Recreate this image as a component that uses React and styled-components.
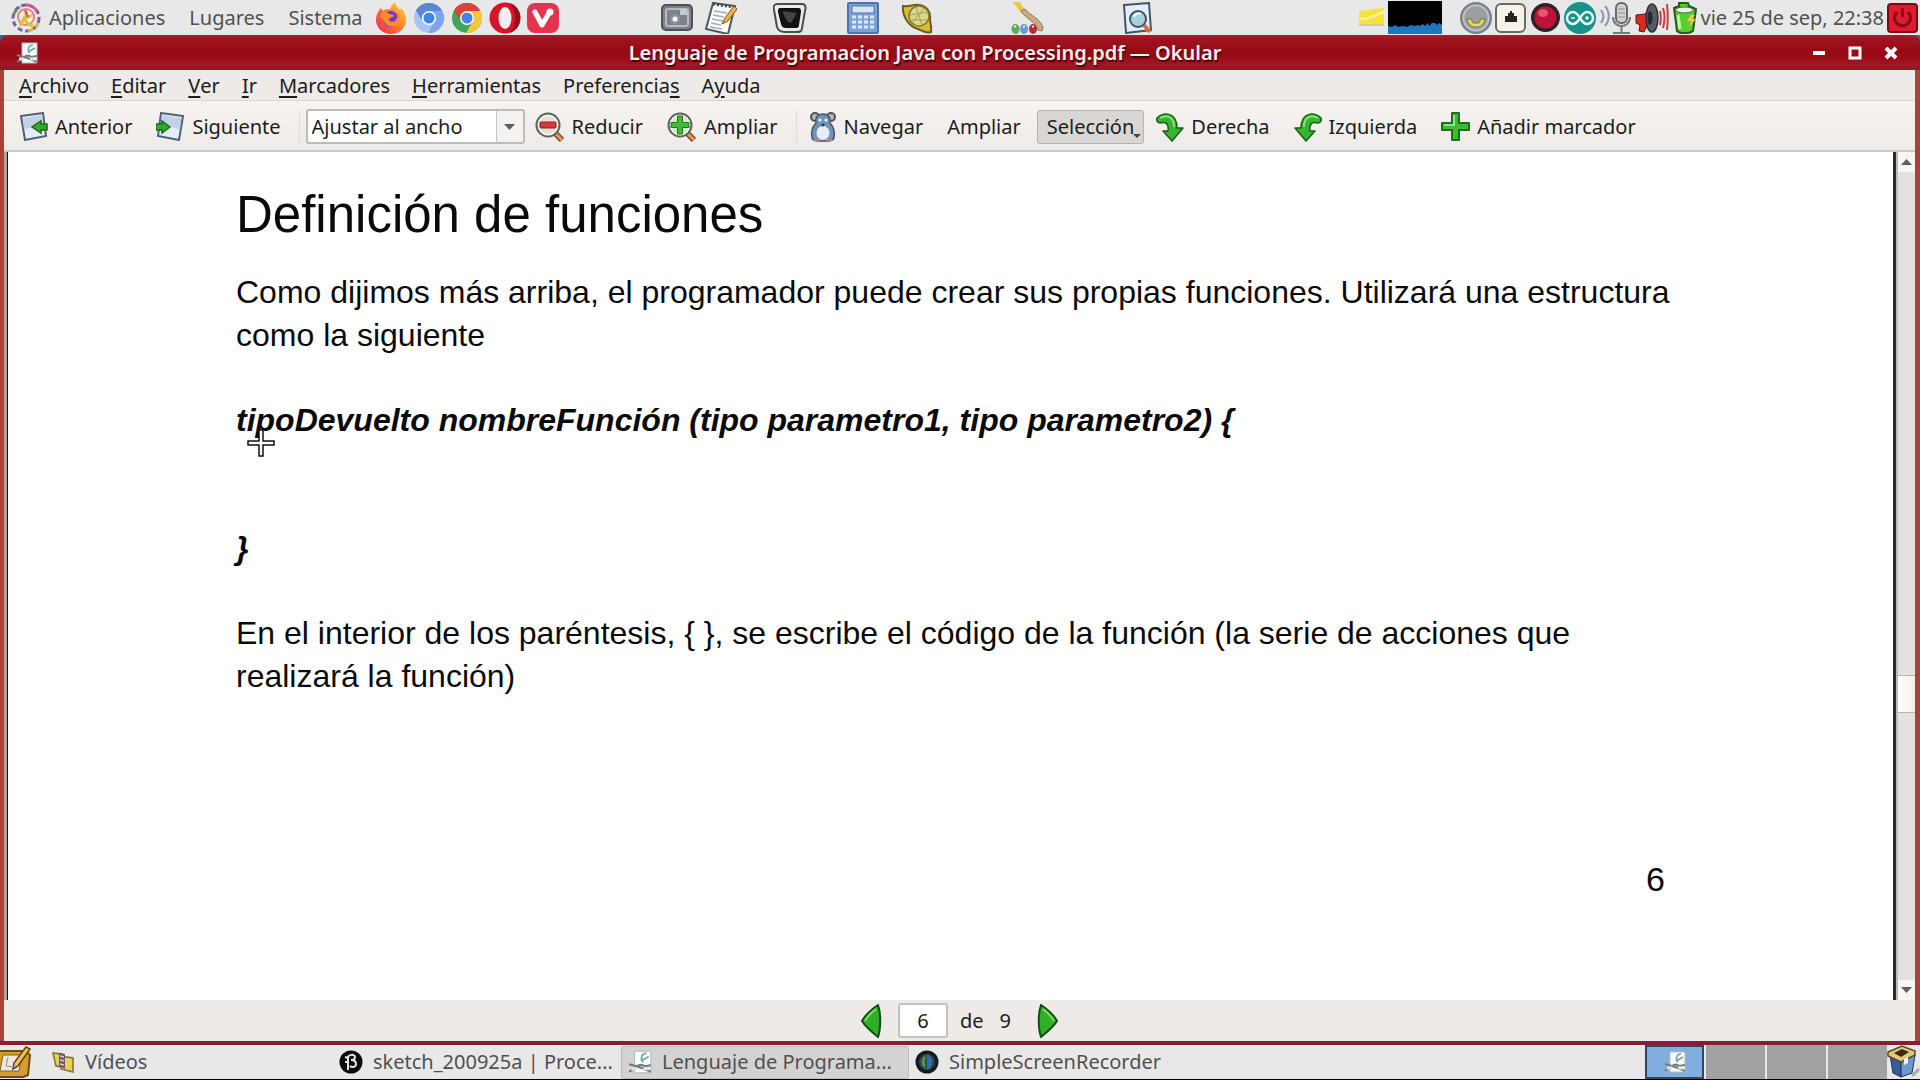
import React, { useState } from 'react';
import styled, { createGlobalStyle, css } from 'styled-components';

const GlobalStyle = createGlobalStyle`
  * {
    box-sizing: border-box;
  }
  body {
    margin: 0;
    background: #000;
    font-family: 'Noto Sans', 'Open Sans', sans-serif;
    font-size: 20px;
    line-height: 28px;
    color: #1c1c1c;
  }
  button, input, select {
    font: inherit;
    color: inherit;
  }
  svg {
    display: block;
    flex-shrink: 0;
  }
`;

const Desktop = styled.div`
  min-height: 100vh;
  display: flex;
  flex-direction: column;
  border-bottom: 1px solid #000;
  background: #3f6592;
`;

const PlainButton = styled.button`
  display: flex;
  align-items: center;
  padding: 0;
  border: 0;
  background: none;
  white-space: nowrap;
`;

/* top panel */

const Panel = styled.header`
  height: 35px;
  display: flex;
  align-items: center;
  justify-content: space-between;
  padding: 0 2px 0 10px;
  background: #e8e8e8;
  color: #505050;
`;

const PanelGroup = styled.div`
  display: flex;
  align-items: center;
  gap: ${({ $gap }) => $gap || 0}px;
`;

const PanelMenus = styled(PanelGroup)`
  width: 365px;
`;

const AppsButton = styled(PlainButton)`
  gap: 7px;
`;

const Launcher = styled(PlainButton)`
  margin-left: ${({ $before }) => $before}px;
`;

const Clock = styled.time`
  white-space: nowrap;
`;

const Monitor = styled.div`
  margin-right: 15px;
`;

/* window */

const Window = styled.main`
  flex: 1;
  display: flex;
  flex-direction: column;
  border-bottom: 4px solid #861f31;
`;

const TitleBar = styled.div`
  height: 35px;
  display: flex;
  align-items: center;
  justify-content: space-between;
  padding: 0 22px 0 16px;
  background: linear-gradient(#a5202c, #a01422 10%, #980b16 40%, #980b16 60%, #a41524 85%, #8f1826);
  border-radius: 8px 8px 0 0;
`;

const Title = styled.h1`
  margin: 0;
  font-size: 20px;
  font-weight: 600;
  color: #f6ecec;
  text-shadow: 1px 2px 1px #40060c;
`;

const WindowButtons = styled.div`
  display: flex;
  gap: 22px;
`;

const Body = styled.div`
  flex: 1;
  display: flex;
  flex-direction: column;
  border: solid #ae4038;
  border-width: 0 5px 0 4px;
  background: #edeae8;
`;

const MenuBar = styled.nav`
  height: 31px;
  display: flex;
  align-items: center;
  gap: 22px;
  padding: 2px 0 0 15px;
  border-bottom: 1px solid #d8d4d1;
  u {
    text-underline-offset: 3px;
    text-decoration-thickness: 2px;
  }
`;

const Toolbar = styled.div`
  height: 51px;
  display: flex;
  align-items: center;
  padding: 2px 0 0 15px;
  background: linear-gradient(#f6f3f0, #edeae8);
  border-bottom: 2px solid #cbc8c5;
`;

const ToolButton = styled(PlainButton)`
  gap: 7px;
  height: 34px;
  margin-right: 24px;
  ${({ $active }) => $active && css`
    position: relative;
    margin: 0 12px 0 -8px;
    padding: 0 9px;
    border: 1px solid #b5b2b0;
    border-radius: 3px;
    background: #d9d7d5;
  `}
`;

const MenuMark = styled.span`
  position: absolute;
  right: 2px;
  bottom: 5px;
  border: 4px solid transparent;
  border-top-color: #444;
  border-bottom: 0;
`;

const Divider = styled.div`
  width: 1px;
  height: 34px;
  margin: 0 ${({ $after }) => $after}px 0 -6px;
  background: #dfdcd9;
`;

const Zoom = styled.label`
  width: 219px;
  height: 35px;
  display: flex;
  position: relative;
  margin-right: 10px;
  border: 2px solid #bebbb8;
  border-radius: 3px;
  background: linear-gradient(to right, #fff 188px, #c5c2bf 188px, #c5c2bf 189px, #f4f2f0 189px);
  select {
    width: 100%;
    padding: 0 4px;
    border: 0;
    background: none;
    appearance: none;
  }
  svg {
    position: absolute;
    right: 8px;
    top: 13px;
    pointer-events: none;
  }
`;

/* document */

const Viewer = styled.div`
  flex: 1;
  display: flex;
  border-left: 3px solid #b5a19a;
`;

const Page = styled.article`
  flex: 1;
  padding: 31px 208px 0 228px;
  background: #fff;
  color: #0a0a0a;
  border-left: 1px solid #111;
  border-right: 3px solid #2b2b2b;
  font-family: 'Liberation Sans', Arial, sans-serif;
  font-size: 32px;
  line-height: 43px;
`;

const Heading = styled.h2`
  margin: 0 0 24px;
  font-size: 51px;
  font-weight: 400;
  line-height: 64px;
`;

const Paragraph = styled.p`
  margin: 0 0 42px;
`;

const Code = styled.p`
  position: relative;
  margin: 0 0 ${({ $after }) => $after}px;
  font-weight: 700;
  font-style: italic;
`;

const Pointer = styled.svg`
  position: absolute;
  left: 11px;
  top: 30px;
`;

const PageNumber = styled.p`
  margin: 160px 20px 0 0;
  font-size: 34px;
  text-align: right;
`;

const ScrollBar = styled.div`
  width: 19px;
  display: flex;
  flex-direction: column;
  background: #e4e1e0;
  border-left: 2px solid #bdbab8;
`;

const ScrollArrow = styled(PlainButton)`
  height: 20px;
  justify-content: center;
  background: #f8f6f5;
`;

const ScrollSpace = styled.div`
  flex: ${({ $size }) => $size};
`;

const ScrollThumb = styled.div`
  height: 38px;
  border: 1px solid #b8b5b3;
  border-width: 1px 0;
  background: linear-gradient(to right, #fff, #f3eeeb);
`;

const PageNav = styled.form`
  height: 41px;
  display: flex;
  align-items: center;
  justify-content: center;
  gap: 16px;
`;

const PageInput = styled.input`
  width: 50px;
  height: 35px;
  padding: 0;
  border: 2px solid #c3c0be;
  border-radius: 3px;
  background: #fff;
  text-align: center;
`;

const PageCount = styled.div`
  display: flex;
  gap: 16px;
  margin: 0 10px 0 -4px;
`;

/* bottom panel */

const TaskBar = styled.footer`
  height: 34px;
  display: flex;
  align-items: center;
  background: #e8e8e8;
  color: #505050;
`;

const ShowDesktop = styled(PlainButton)`
  width: 45px;
`;

const Task = styled(PlainButton)`
  flex: 0 1 288px;
  min-width: 0;
  height: 33px;
  padding: 0 8px 0 6px;
  gap: 10px;
  ${({ $active }) => $active && css`
    background: #d5d3d2;
    border: 1px solid #bfbdbc;
    border-radius: 2px;
  `}
  span {
    overflow: hidden;
    text-overflow: ellipsis;
  }
`;

const Pager = styled.div`
  display: flex;
  gap: 2px;
  margin-left: auto;
`;

const Workspace = styled(PlainButton)`
  width: 59px;
  height: 34px;
  justify-content: center;
  background: ${({ $current }) => ($current ? '#82aedf' : '#a1a1a1')};
  border: ${({ $current }) => ($current ? '2px solid #33445c' : '0')};
`;

/* icons */

const Svg = ({ w = 32, h, box, children }) => (
  <svg width={w} height={h || w} viewBox={box || `0 0 ${w} ${h || w}`} fill="none" aria-hidden="true">
    {children}
  </svg>
);

const Distro = () => (
  <Svg>
    <circle cx="16" cy="16" r="13" stroke="#7d5fa6" strokeWidth="3" strokeDasharray="5 3" />
    <path d="M16 3a13 13 0 0 1 12 8" stroke="#e0578c" strokeWidth="3" strokeDasharray="5 3" />
    <path d="M28 21a13 13 0 0 1-11 8" stroke="#e6b63c" strokeWidth="3" strokeDasharray="5 3" />
    <path d="M4 12a13 13 0 0 1 6-7" stroke="#5c9b55" strokeWidth="3" strokeDasharray="5 3" />
    <circle cx="16" cy="15" r="8" fill="#f7efe4" stroke="#e47f82" strokeWidth="2" />
    <path d="M16 9v7l6-3M10 24l4-8 4 6 5 2" stroke="#d9c43e" strokeWidth="3" />
    <path d="M15 8l3 7" stroke="#d75252" strokeWidth="2" />
  </Svg>
);

const Firefox = () => (
  <Svg>
    <defs>
      <linearGradient id="fox" x1="0" y1="1" x2="1" y2="0">
        <stop offset="0" stopColor="#e8216a" />
        <stop offset=".5" stopColor="#ff7a2a" />
        <stop offset="1" stopColor="#ffe03f" />
      </linearGradient>
    </defs>
    <path d="M6 6l2 3c2-2 5-2 7-2 1-3 3-5 5-7 0 4 3 5 5 8l1-2c4 4 5 8 5 12a15 14 0 0 1-30 0C1 13 3 9 6 6z" fill="url(#fox)" />
    <circle cx="16" cy="17" r="8" fill="#7236c9" />
    <path d="M6 12c3-3 7-2 8 0 3 0 5 1 5 2-2 2-5 1-5 4 2 3 7 2 8-2 1-3-1-5-3-6 6 0 8 6 5 11-4 6-13 4-15-2-2-2-4-5-3-7z" fill="#ff8b2b" />
  </Svg>
);

const ChromeLogo = ({ a, b, c }) => (
  <Svg>
    <circle cx="16" cy="16" r="15" fill={b} />
    <path d="M16 16L3 8.500A15 15 0 0 1 29 8.500z" fill={a} />
    <path d="M16 9h13.300A15 15 0 0 1 15 31l7-12z" fill={c} />
    <path d="M3 8.500A15 15 0 0 1 29 9H16a7 7 0 0 0-6 11z" fill={a} />
    <circle cx="16" cy="16" r="7" fill="#fff" />
    <circle cx="16" cy="16" r="5.500" fill="#4285e8" />
  </Svg>
);

const Opera = () => (
  <Svg>
    <ellipse cx="16" cy="16" rx="15.500" ry="15.500" fill="#d4152c" />
    <path d="M20 1c15 3 15 27 0 30 8-6 8-24 0-30z" fill="#9d0d1d" />
    <ellipse cx="16" cy="16" rx="6.500" ry="11" fill="#eee" />
  </Svg>
);

const Vivaldi = () => (
  <Svg>
    <rect x="0" y="1" width="32" height="30" rx="8" fill="#e2344d" />
    <path d="M8 10l7 13 7-12" stroke="#fff" strokeWidth="5" strokeLinecap="round" strokeLinejoin="round" />
    <circle cx="23" cy="10" r="3.500" fill="#fff" />
  </Svg>
);

const Screenshot = () => (
  <Svg>
    <rect x="1" y="3" width="30" height="25" rx="4" fill="#7e8187" stroke="#4f5359" strokeWidth="2" />
    <rect x="5" y="7" width="22" height="17" rx="2" stroke="#b6b9bf" strokeWidth="2" />
    <rect x="19" y="7" width="7" height="6" fill="#c6c9cd" />
    <circle cx="14" cy="17" r="5" fill="#8b93a5" />
    <circle cx="14" cy="17" r="2.500" fill="#fff" />
  </Svg>
);

const Notepad = () => (
  <Svg>
    <path d="M8 1l22 3-7 28-22-5z" fill="#fbfbfb" stroke="#54575c" strokeWidth="2" />
    <path d="M8 2l21 3" stroke="#44474c" strokeWidth="3" strokeDasharray="2 2" />
    <path d="M9 9l13 2M8 13l11 2M7 17l11 2M6 21l10 2M5 25l12 2" stroke="#a3acba" strokeWidth="1.500" />
    <path d="M29 4l-9 12-3 6 6-3 9-12z" fill="#eab343" stroke="#7b5a1e" />
  </Svg>
);

const Terminal = () => (
  <Svg w={34} h={32}>
    <path d="M5 2h24c4 0 4 4 3 7l-3 17c0 4-3 4-6 4H12c-5 0-7-2-8-5L1 8C0 4 1 2 5 2z" fill="#ecebe6" stroke="#4c4c48" strokeWidth="2" />
    <path d="M8 6h17c3 0 3 2 3 4l-2 13c0 3-2 3-4 3h-8c-4 0-5-1-6-4L5 10c0-3 0-4 3-4z" fill="#111" />
    <path d="M10 9l14 2-6 10c-4-1-7-5-8-12z" fill="#444" />
  </Svg>
);

const Calculator = () => (
  <Svg>
    <rect x="1" y="1" width="30" height="30" rx="1" fill="#7ba2d8" stroke="#4b74ae" strokeWidth="2" />
    <rect x="5" y="4" width="22" height="7" fill="#dbe6f4" stroke="#4b74ae" />
    <path d="M5 15h22M5 20h22M5 25h22" stroke="#dce7f5" strokeWidth="3" strokeDasharray="4 2" />
  </Svg>
);

const Shell = () => (
  <Svg>
    <path d="M2 4c7 1 10-2 16-1 8 1 12 7 11 14 0 4 2 8 1 13-5 2-9-1-13-3C8 25 1 14 2 4z" fill="#d9ba35" stroke="#6b5d1e" strokeWidth="2" />
    <circle cx="18" cy="14" r="10" fill="#dbd58e" stroke="#827836" strokeWidth="1.500" />
    <path d="M9 13l18-3M11 21l12-15M10 18l16 0M15 5l6 18" stroke="#a69d55" />
  </Svg>
);

const Brush = () => (
  <Svg w={36} h={32}>
    <path d="M2 0l6-1 6 9-4 3z" fill="#edc544" />
    <path d="M10 9l4-2c6 7 14 9 18 18l-1 4-4-1C25 20 15 17 10 9z" fill="#c9aa83" stroke="#95785a" />
    <ellipse cx="4.500" cy="27" rx="4" ry="5" fill="#58ae54" />
    <ellipse cx="13" cy="27" rx="4" ry="5" fill="#6d97d4" />
    <ellipse cx="22" cy="27" rx="4" ry="5" fill="#b72b3b" />
    <path d="M3 25l2-1M12 25l2-1M21 25l2-1" stroke="#fff" strokeWidth="1.500" />
  </Svg>
);

const DocSearch = () => (
  <Svg>
    <path d="M3 3l25-2 2 27-25 3z" fill="#e4eefa" stroke="#43536a" strokeWidth="2" />
    <circle cx="17" cy="17" r="8" fill="#a5d0dd" stroke="#3e545f" strokeWidth="2" />
    <path d="M13 15c1-4 5-4 7-3" stroke="#fff" strokeWidth="2" />
    <path d="M23 23l6 7" stroke="#db6a3c" strokeWidth="4" />
  </Svg>
);

const Sticky = () => (
  <Svg w={27} h={22}>
    <path d="M1 4c8 0 15-3 25-3v16H1z" fill="#f4e33e" />
    <path d="M1 11c10 0 16-4 25-8v3C18 10 12 13 1 13z" fill="#fbf192" />
    <path d="M1 17h25v2H1z" fill="#d2cca0" />
  </Svg>
);

const CpuGraph = () => (
  <Svg w={54} h={33}>
    <path d="M0 0h54v33H0z" fill="#000" />
    <path d="M0 33v-8l4 1 3-2 3 2 5-1 4 1 4-2 4 1 3-1 2 1 3-2 2 2 3-3 1 3 3-3 3 0 2 2 2-2 3 2v9z" fill="#1d78c1" />
  </Svg>
);

const TrayFace = () => (
  <Svg>
    <circle cx="16" cy="16" r="15" fill="#9a9ea2" stroke="#787d88" strokeWidth="2" />
    <circle cx="16" cy="16" r="12.500" stroke="#c3c7cd" strokeWidth="1.500" />
    <path d="M7 17h4l2 4h6l2-4h4c-1 5-4 8-9 8s-8-3-9-8z" fill="#e7df56" stroke="#7b7839" />
  </Svg>
);

const TrayNet = () => (
  <Svg>
    <rect x="1" y="2" width="29" height="28" rx="5" fill="#f5f2e9" stroke="#6d685c" strokeWidth="2" />
    <path d="M10 20v-6h3v-3h2V9h2v2h2v3h3v6z" fill="#25261f" />
  </Svg>
);

const TrayRecord = () => (
  <Svg w={31}>
    <circle cx="15.500" cy="15.500" r="14.500" fill="#2d2226" />
    <circle cx="15.500" cy="15.500" r="11" fill="#be1239" />
    <ellipse cx="13" cy="11" rx="5" ry="4" fill="#e25872" />
  </Svg>
);

const Arduino = () => (
  <Svg>
    <circle cx="16" cy="16" r="16" fill="#169288" />
    <path d="M16 16c-3-5-5-6-7-6a6 6 0 0 0 0 12c2 0 4-1 7-6s5-6 7-6a6 6 0 0 1 0 12c-2 0-4-1-7-6z" stroke="#e5f4f4" strokeWidth="2.500" />
    <path d="M7 16h4M21 16h4M23 14v4" stroke="#e5f4f4" strokeWidth="1.500" />
  </Svg>
);

const Mic = () => (
  <Svg w={33} h={32}>
    <path d="M2 8c3 4 3 9 0 13M6 4c5 6 5 14 0 20" stroke="#8d95b4" strokeWidth="2" />
    <rect x="17" y="1" width="11" height="20" rx="5" fill="#cfd0d2" stroke="#69696b" strokeWidth="2" />
    <path d="M14 15c0 12 17 12 17 0M22.500 24v6M14 31h17" stroke="#79797b" strokeWidth="2" />
    <path d="M19 7h7M19 11h7M19 15h7" stroke="#8e8e92" />
  </Svg>
);

const Speaker = () => (
  <Svg w={34} h={32}>
    <path d="M1 13l9-1 7-8v21l-5-1-3 6-5-1 1-6-4-2z" fill="#d92c1e" stroke="#5c1512" />
    <ellipse cx="17" cy="16" rx="6" ry="14" fill="#555a64" stroke="#2e3138" strokeWidth="1.500" />
    <ellipse cx="15" cy="16" rx="2.500" ry="7" fill="#252830" />
    <path d="M25 9c1 4 1 9 0 14M28 6c2 6 2 13 0 20M32 2c1 8 1 17 0 26" stroke="#cb3d43" strokeWidth="2" />
  </Svg>
);

const Battery = () => (
  <Svg w={26} h={32}>
    <path d="M2 6l5-2V1h9l1 3 7 3-3 22c-4 3-13 3-16 0z" fill="#59ce31" stroke="#2b561e" strokeWidth="2" />
    <ellipse cx="12.500" cy="8" rx="9" ry="3" fill="#e6efe2" stroke="#46643c" />
    <path d="M6 13l2 14" stroke="#c1f5a8" strokeWidth="3" />
    <path d="M19 13l-4 6h4l-2 6 7-8h-4l3-4z" fill="#f1cc38" />
  </Svg>
);

const Power = () => (
  <Svg w={31} h={32}>
    <rect x="1" y="2" width="29" height="28" rx="3" fill="#dc1c31" stroke="#7d0715" strokeWidth="2" />
    <path d="M10 10a8 8 0 1 0 11 0" stroke="#8d0716" strokeWidth="3" />
    <path d="M15.500 6v9" stroke="#8d0716" strokeWidth="3" />
  </Svg>
);

const Okular = ({ w = 22 }) => (
  <Svg w={w} box="0 0 22 22">
    <path d="M6 1h15v20H6z" fill="#fbfbfb" stroke="#b3bdbd" />
    <path d="M17 3c-5 0-6 6-3 8M12 10l7-4" stroke="#68a4a8" strokeWidth="1.500" />
    <path d="M1 13l7 2c3-2 5-2 7 0l6-1M1 20l7-5 6 2 7 3" stroke="#727c7c" strokeWidth="2" />
    <path d="M3 17h5M14 17h5" stroke="#dce4e4" strokeWidth="3" />
  </Svg>
);

const GoPage = ({ forward }) => (
  <Svg w={29}>
    <g transform={forward ? 'matrix(-1 0 0 1 29 0)' : undefined}>
      <path d="M2 4l22-3 3 23-21 4z" fill="#e5edf6" stroke="#4e6273" strokeWidth="2" />
      <path d="M4 6l18-3 2 8L5 18z" fill="#c1d2e6" />
    </g>
    <path
      d={forward ? 'M0 12h6V9l8 6-8 6v-3H0z' : 'M28 12h-6V9l-9 6 9 6v-3h6z'}
      fill="#35a92c"
      stroke="#1c6b17"
      strokeWidth="1.500"
    />
  </Svg>
);

const Lens = ({ plus }) => (
  <Svg w={30}>
    <path d="M20 21l7 7" stroke="#7b4b28" strokeWidth="6" />
    <path d="M20 21l7 7" stroke="#e39a61" strokeWidth="3" />
    <circle cx="13" cy="13" r="11.500" fill={plus ? '#d5e8cf' : '#e9dfd8'} stroke="#59665a" strokeWidth="2" />
    <circle cx="13" cy="13" r="9.500" stroke="#f3f3e8" strokeWidth="1.500" />
    {plus ? (
      <path d="M10.500 4h5v6.500H22v5h-6.500V22h-5v-6.500H4v-5h6.500z" fill="#42b938" stroke="#207a1b" />
    ) : (
      <rect x="5" y="10" width="16" height="6" rx="1" fill="#d8383a" stroke="#842125" />
    )}
  </Svg>
);

const Mouse = () => (
  <Svg w={28} h={30}>
    <circle cx="6" cy="5" r="4" fill="#cbb0a2" stroke="#4a5664" strokeWidth="2" />
    <circle cx="22" cy="5" r="4" fill="#cbb0a2" stroke="#4a5664" strokeWidth="2" />
    <path d="M14 2c6 0 8 5 7 9 4 4 5 10 4 14 0 4-4 4-11 4S3 29 3 25c-1-5 0-10 4-14-1-5 1-9 7-9z" fill="#7391b5" stroke="#425974" strokeWidth="1.500" />
    <ellipse cx="14" cy="21" rx="6.500" ry="7" fill="#e6edf4" />
    <circle cx="11" cy="8" r="1.500" fill="#fff" />
    <circle cx="17" cy="8" r="1.500" fill="#fff" />
    <path d="M12 12h4l-2 3z" fill="#29374a" />
    <path d="M5 28h6M17 28h6" stroke="#b48b80" strokeWidth="2" />
  </Svg>
);

const Turn = ({ left }) => (
  <Svg w={28} h={30}>
    <g transform={left ? 'matrix(-1 0 0 1 28 0)' : undefined}>
      <path
        d="M1 6c5-6 20-7 20 10h6L16 29 7 19h5c1-7-2-10-8-8-2 0-4-2-3-5z"
        fill="#37b432"
        stroke="#175f16"
        strokeWidth="1.500"
        strokeLinejoin="round"
      />
      <path d="M4 6c7-4 14-1 14 9" stroke="#86e474" strokeWidth="2" />
    </g>
  </Svg>
);

const Plus = () => (
  <Svg w={29}>
    <path d="M11 1h7v10h10v7H18v10h-7V18H1v-7h10z" fill="#3dbb32" stroke="#1b711b" strokeWidth="2" strokeLinejoin="round" />
    <path d="M13 3v10H3" stroke="#90e681" strokeWidth="2" />
  </Svg>
);

const PageArrow = ({ next }) => (
  <Svg w={21} h={34}>
    <g transform={next ? 'matrix(-1 0 0 1 21 0)' : undefined}>
      <path d="M17 1c3 8 3 23 0 32C12 29 4 22 1 17 4 11 12 4 17 1z" fill="#2fae28" stroke="#124d12" strokeWidth="2" />
      <path d="M15 5C11 8 6 13 4 17" stroke="#79dd67" strokeWidth="2" />
    </g>
  </Svg>
);

const Triangle = ({ up }) => (
  <Svg w={11} h={6}>
    <path d={up ? 'M0 6l5.500-6L11 6z' : 'M0 0h11L5.500 6z'} fill="#62605e" />
  </Svg>
);

const DesktopPad = () => (
  <Svg w={31} h={32}>
    <path d="M-3 5h28l5 4-2 20-5 2H-3z" fill="#d69e2f" stroke="#6e4b14" strokeWidth="2" />
    <path d="M3 9h19l-3 16H0z" fill="#eae9e2" stroke="#7c6128" />
    <path d="M26 1l4 2-12 17-5 3 1-6z" fill="#f2c25c" stroke="#5f4317" strokeWidth="1.500" />
    <path d="M8 11l-2 9 8 1" stroke="#8d8d8a" />
  </Svg>
);

const VideoFolder = () => (
  <Svg w={24}>
    <path d="M2 3l9 1v13L5 16z" fill="#e7d158" stroke="#7e7331" strokeWidth="1.500" />
    <path d="M9 6l13 2v14l-12-3z" fill="#e7d158" stroke="#7e7331" strokeWidth="1.500" />
    <path d="M8 3l6 1v15l-6-3z" fill="#74566c" />
    <path d="M9 6l4 1M9 10l4 1M9 14l4 1" stroke="#dccbd7" strokeWidth="1.500" />
  </Svg>
);

const Processing = () => (
  <Svg w={24}>
    <circle cx="12" cy="12" r="11.500" fill="#0b0b0b" />
    <path d="M9 20V8c0-4 7-4 7-1 0 2-2 3-4 3 3 0 5 1 5 4 0 3-4 4-6 2M6 7l3 1M6 12h3" stroke="#e5e5e5" strokeWidth="2" />
  </Svg>
);

const Recorder = () => (
  <Svg w={24}>
    <circle cx="12" cy="12" r="11.500" fill="#161a1c" />
    <circle cx="12" cy="12" r="8" fill="#214856" />
    <path d="M12 4c7 3 7 13 0 16z" fill="#3470a0" />
    <path d="M11 4c-7 4-7 12 0 16z" fill="#2c6647" />
    <path d="M10 7c-3 3-2 8 0 9" stroke="#7a9a4c" strokeWidth="2" />
  </Svg>
);

const Trash = () => (
  <Svg w={33} h={34}>
    <path d="M3 10l11 6v16L6 28z" fill="#375a98" stroke="#1d315a" />
    <path d="M14 16l14-6-3 18-11 4z" fill="#7096cf" stroke="#1d315a" />
    <path d="M1 7l14-6 13 5v4l-14 7L1 11z" fill="#e2c679" stroke="#5b491f" strokeWidth="1.500" />
    <path d="M7 8l8-4 7 3-8 5z" fill="#3a2a15" />
    <path d="M17 14l4-2v6l-4 2z" fill="#eef2f8" />
    <path d="M25 31l4-4 3-3" stroke="#a5a9b0" strokeWidth="3" />
  </Svg>
);

const menus = [
  ['', 'A', 'rchivo'],
  ['', 'E', 'ditar'],
  ['', 'V', 'er'],
  ['', 'I', 'r'],
  ['', 'M', 'arcadores'],
  ['', 'H', 'erramientas'],
  ['Preferencia', 's', ''],
  ['A', 'y', 'uda'],
];

const browsers = [
  { name: 'Firefox', icon: <Firefox /> },
  { name: 'Chromium', icon: <ChromeLogo a="#5a86d8" b="#a9c3f2" c="#7fa5ea" /> },
  { name: 'Chrome', icon: <ChromeLogo a="#d8433a" b="#3fa557" c="#f3c63b" /> },
  { name: 'Opera', icon: <Opera /> },
  { name: 'Vivaldi', icon: <Vivaldi /> },
];

const launchers = [
  { name: 'Captura', before: 102, icon: <Screenshot /> },
  { name: 'Notas', before: 12, icon: <Notepad /> },
  { name: 'Terminal', before: 36, icon: <Terminal /> },
  { name: 'Calculadora', before: 40, icon: <Calculator /> },
  { name: 'Caja', before: 22, icon: <Shell /> },
  { name: 'Dibujo', before: 78, icon: <Brush /> },
  { name: 'Visor', before: 74, icon: <DocSearch /> },
];

const App = () => {
  const [zoom, setZoom] = useState('Ajustar al ancho');
  const [page, setPage] = useState('6');

  return (
    <>
      <GlobalStyle />
      <Desktop>
        <Panel>
          <PanelGroup>
            <PanelMenus $gap={24}>
              <AppsButton><Distro />Aplicaciones</AppsButton>
              <PlainButton>Lugares</PlainButton>
              <PlainButton>Sistema</PlainButton>
            </PanelMenus>
            <PanelGroup $gap={6}>
              {browsers.map((item) => (
                <PlainButton key={item.name} aria-label={item.name}>{item.icon}</PlainButton>
              ))}
            </PanelGroup>
            {launchers.map((item) => (
              <Launcher key={item.name} $before={item.before} aria-label={item.name}>{item.icon}</Launcher>
            ))}
          </PanelGroup>
          <PanelGroup $gap={3}>
            <Sticky />
            <Monitor><CpuGraph /></Monitor>
            <TrayFace />
            <TrayNet />
            <TrayRecord />
            <Arduino />
            <Mic />
            <Speaker />
            <Battery />
            <Clock>vie 25 de sep, 22:38</Clock>
            <PlainButton aria-label="Apagar"><Power /></PlainButton>
          </PanelGroup>
        </Panel>

        <Window>
          <TitleBar>
            <Okular />
            <Title>Lenguaje de Programacion Java con Processing.pdf — Okular</Title>
            <WindowButtons>
              <PlainButton aria-label="Minimizar">
                <Svg w={14}><path d="M1 7h12" stroke="#fff" strokeWidth="4" /></Svg>
              </PlainButton>
              <PlainButton aria-label="Maximizar">
                <Svg w={14}><path d="M2 2h10v10H2z" stroke="#fff" strokeWidth="3" /></Svg>
              </PlainButton>
              <PlainButton aria-label="Cerrar">
                <Svg w={14}><path d="M2 2l10 10M12 2L2 12" stroke="#fff" strokeWidth="4" /></Svg>
              </PlainButton>
            </WindowButtons>
          </TitleBar>

          <Body>
            <MenuBar>
              {menus.map(([before, key, after]) => (
                <PlainButton key={before + key + after}>{before}<u>{key}</u>{after}</PlainButton>
              ))}
            </MenuBar>

            <Toolbar>
              <ToolButton><GoPage />Anterior</ToolButton>
              <ToolButton><GoPage forward />Siguiente</ToolButton>
              <Divider $after={6} />
              <Zoom>
                <select aria-label="Zoom" value={zoom} onChange={(e) => setZoom(e.target.value)}>
                  <option>Ajustar al ancho</option>
                </select>
                <Triangle />
              </Zoom>
              <ToolButton><Lens />Reducir</ToolButton>
              <ToolButton><Lens plus />Ampliar</ToolButton>
              <Divider $after={12} />
              <ToolButton><Mouse />Navegar</ToolButton>
              <ToolButton>Ampliar</ToolButton>
              <ToolButton $active>Selección<MenuMark /></ToolButton>
              <ToolButton><Turn />Derecha</ToolButton>
              <ToolButton><Turn left />Izquierda</ToolButton>
              <ToolButton><Plus />Añadir marcador</ToolButton>
            </Toolbar>

            <Viewer>
              <Page>
                <Heading>Definición de funciones</Heading>
                <Paragraph>
                  Como dijimos más arriba, el programador puede crear sus propias funciones. Utilizará una
                  estructura como la siguiente
                </Paragraph>
                <Code $after={85}>
                  {'tipoDevuelto nombreFunción (tipo parametro1, tipo parametro2) {'}
                  <Pointer width="28" height="28" viewBox="0 0 28 28" aria-hidden="true">
                    <path d="M12 1h4v11h11v4H16v11h-4V16H1v-4h11z" fill="#fff" stroke="#111" strokeWidth="1.500" />
                  </Pointer>
                </Code>
                <Code $after={42}>{'}'}</Code>
                <Paragraph>
                  {'En el interior de los paréntesis, { }, se escribe el código de la función (la serie de acciones que realizará la función)'}
                </Paragraph>
                <PageNumber>6</PageNumber>
              </Page>
              <ScrollBar>
                <ScrollArrow aria-label="Subir"><Triangle up /></ScrollArrow>
                <ScrollSpace $size={504} />
                <ScrollThumb />
                <ScrollSpace $size={267} />
                <ScrollArrow aria-label="Bajar"><Triangle /></ScrollArrow>
              </ScrollBar>
            </Viewer>

            <PageNav onSubmit={(e) => e.preventDefault()}>
              <PlainButton type="button" aria-label="Página anterior"><PageArrow /></PlainButton>
              <PageInput aria-label="Página" value={page} onChange={(e) => setPage(e.target.value)} />
              <PageCount>
                <span>de</span>
                <span>9</span>
              </PageCount>
              <PlainButton type="button" aria-label="Página siguiente"><PageArrow next /></PlainButton>
            </PageNav>
          </Body>
        </Window>

        <TaskBar>
          <ShowDesktop aria-label="Mostrar escritorio"><DesktopPad /></ShowDesktop>
          <Task><VideoFolder /><span>Vídeos</span></Task>
          <Task><Processing /><span>sketch_200925a | Proce...</span></Task>
          <Task $active><Okular w={24} /><span>Lenguaje de Programa...</span></Task>
          <Task><Recorder /><span>SimpleScreenRecorder</span></Task>
          <Pager>
            <Workspace $current aria-label="Área 1"><Okular /></Workspace>
            <Workspace aria-label="Área 2" />
            <Workspace aria-label="Área 3" />
            <Workspace aria-label="Área 4" />
          </Pager>
          <PlainButton aria-label="Papelera"><Trash /></PlainButton>
        </TaskBar>
      </Desktop>
    </>
  );
};

export default App;
